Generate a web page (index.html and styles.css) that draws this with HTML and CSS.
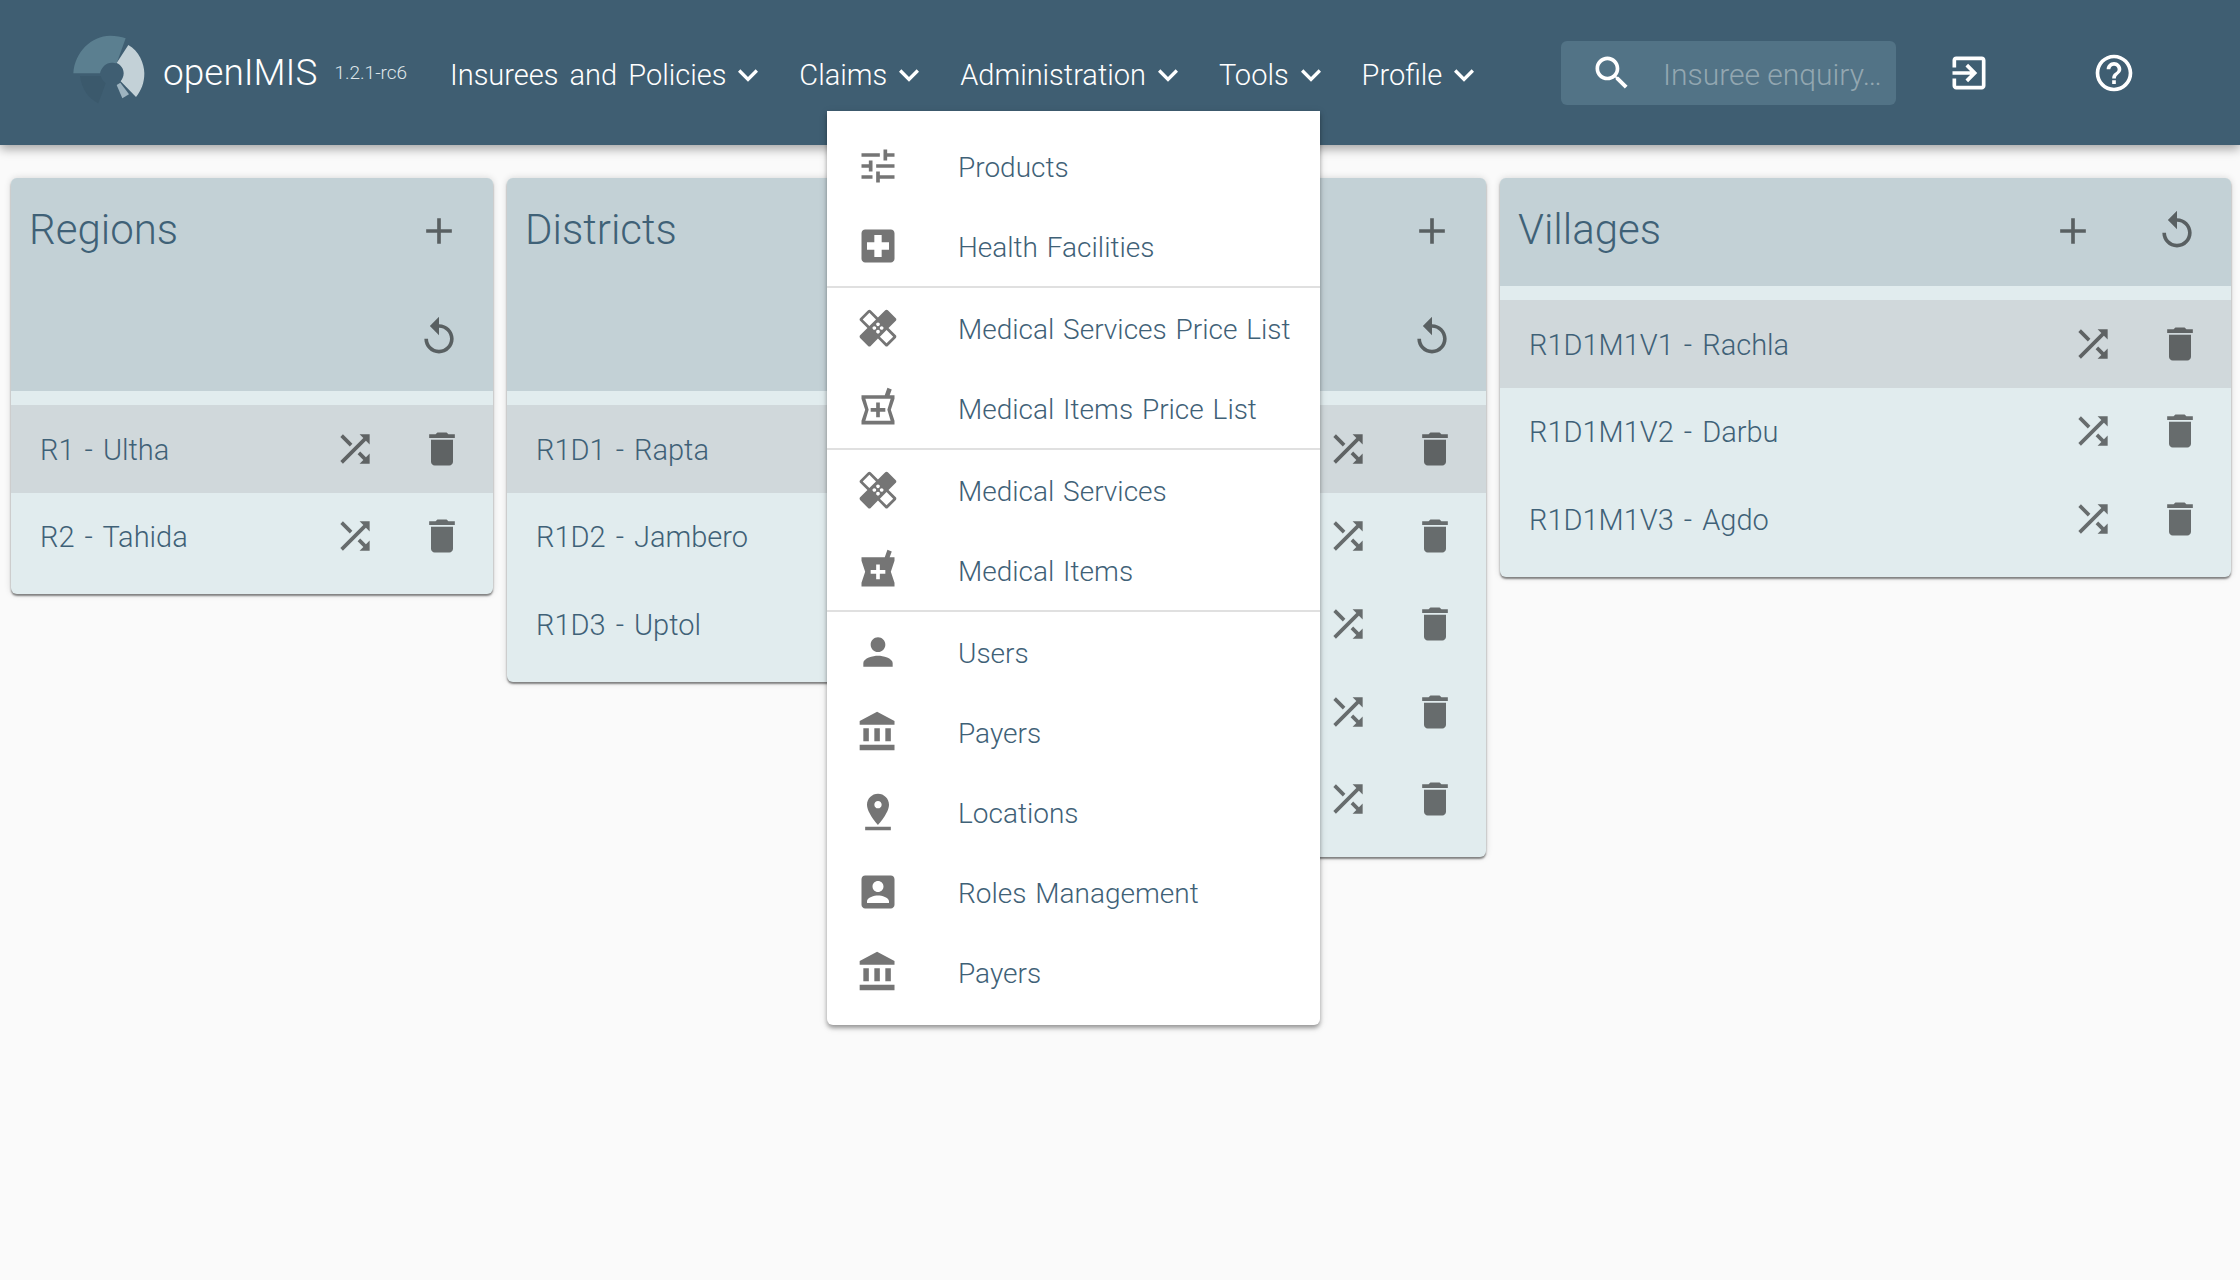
FILE: index.html
```html
<!DOCTYPE html>
<html lang="en">
  <head>
    <meta charset="UTF-8" />
    <meta name="viewport" content="width=device-width, initial-scale=1.0" />
    <title>openIMIS - Locations</title>
    <link rel="stylesheet" href="styles.css">
  </head>
  <body>
    <svg class="sprites" aria-hidden="true">
      <symbol id="i-chevron" viewBox="0 0 24 24"><path d="M16.59 8.59L12 13.17 7.41 8.59 6 10l6 6 6-6z"/></symbol>
      <symbol id="i-search" viewBox="0 0 24 24"><path d="M15.5 14h-.79l-.28-.27C15.41 12.59 16 11.11 16 9.5 16 5.91 13.09 3 9.5 3S3 5.91 3 9.5 5.91 16 9.5 16c1.61 0 3.09-.59 4.23-1.57l.27.28v.79l5 4.99L20.49 19l-4.99-5zm-6 0C7.01 14 5 11.99 5 9.5S7.01 5 9.5 5 14 7.01 14 9.5 11.99 14 9.5 14z"/></symbol>
      <symbol id="i-exit" viewBox="0 0 24 24"><path d="M10.09 15.59L11.5 17l5-5-5-5-1.41 1.41L12.67 11H3v2h9.67l-2.58 2.59zM19 3H5c-1.11 0-2 .9-2 2v4h2V5h14v14H5v-4H3v4c0 1.1.89 2 2 2h14c1.1 0 2-.9 2-2V5c0-1.1-.9-2-2-2z"/></symbol>
      <symbol id="i-help" viewBox="0 0 24 24"><path d="M11 18h2v-2h-2v2zm1-16C6.48 2 2 6.48 2 12s4.48 10 10 10 10-4.48 10-10S17.52 2 12 2zm0 18c-4.41 0-8-3.59-8-8s3.59-8 8-8 8 3.59 8 8-3.59 8-8 8zm0-14c-2.21 0-4 1.79-4 4h2c0-1.1.9-2 2-2s2 .9 2 2c0 2-3 1.75-3 5h2c0-2.25 3-2.5 3-5 0-2.21-1.79-4-4-4z"/></symbol>
      <symbol id="i-tune" viewBox="0 0 24 24"><path d="M3 17v2h6v-2H3zM3 5v2h10V5H3zm10 16v-2h8v-2h-8v-2h-2v6h2zM7 9v2H3v2h4v2h2V9H7zm14 4v-2H11v2h10zm-6-4h2V7h4V5h-4V3h-2v6z"/></symbol>
      <symbol id="i-hospital" viewBox="0 0 24 24"><path d="M19 3H5c-1.1 0-1.99.9-1.99 2L3 19c0 1.1.9 2 2 2h14c1.1 0 2-.9 2-2V5c0-1.1-.9-2-2-2zm-1 11h-4v4h-4v-4H6v-4h4V6h4v4h4v4z"/></symbol>
      <symbol id="i-healing" viewBox="0 0 24 24"><path d="M17.73 12.02l3.98-3.98c.39-.39.39-1.02 0-1.41l-4.34-4.34c-.39-.39-1.02-.39-1.41 0l-3.98 3.98L8 2.29C7.8 2.1 7.55 2 7.29 2c-.25 0-.51.1-.7.29L2.25 6.63c-.39.39-.39 1.02 0 1.41l3.98 3.98L2.25 16c-.39.39-.39 1.02 0 1.41l4.34 4.34c.39.39 1.02.39 1.41 0l3.98-3.98 3.98 3.98c.2.2.45.29.71.29.26 0 .51-.1.71-.29l4.34-4.34c.39-.39.39-1.02 0-1.41l-3.98-3.98zM12 9c.55 0 1 .45 1 1s-.45 1-1 1-1-.45-1-1 .45-1 1-1zm-4.71 1.96L3.66 7.34l3.63-3.63 3.62 3.62-3.62 3.63zM10 13c-.55 0-1-.45-1-1s.45-1 1-1 1 .45 1 1-.45 1-1 1zm2 2c-.55 0-1-.45-1-1s.45-1 1-1 1 .45 1 1-.45 1-1 1zm2-4c.55 0 1 .45 1 1s-.45 1-1 1-1-.45-1-1 .45-1 1-1zm2.66 9.34l-3.63-3.62 3.63-3.63 3.62 3.62-3.62 3.63z"/></symbol>
      <symbol id="i-pharmacy" viewBox="0 0 24 24"><path d="M21 5h-2.64l1.14-3.14L17.15 1l-1.46 4H3v2l2 6-2 6v2h18v-2l-2-6 2-6V5zm-5 9h-3v3h-2v-3H8v-2h3V9h2v3h3v2z"/></symbol>
      <symbol id="i-pharmacy-line" viewBox="0 0 24 24"><path fill-rule="evenodd" d="M21 5h-2.64l1.14-3.14L17.15 1l-1.46 4H3v2l2 6-2 6v2h18v-2l-2-6 2-6V5zM18.89 7l-1.79 6 1.79 6H5.11l1.79-6-1.79-6h13.78zM13 9h-2v3H8v2h3v3h2v-3h3v-2h-3V9z"/></symbol>
      <symbol id="i-person" viewBox="0 0 24 24"><path d="M12 12c2.21 0 4-1.79 4-4s-1.79-4-4-4-4 1.79-4 4 1.79 4 4 4zm0 2c-2.67 0-8 1.34-8 4v2h16v-2c0-2.66-5.33-4-8-4z"/></symbol>
      <symbol id="i-bank" viewBox="0 0 24 24"><path d="M4 10v7h3v-7H4zm6 0v7h3v-7h-3zM2 22h19v-3H2v3zm14-12v7h3v-7h-3zm-4.5-9L2 6v2h19V6l-9.5-5z"/></symbol>
      <symbol id="i-pin" viewBox="0 0 24 24"><path d="M18 8c0-3.31-2.69-6-6-6S6 4.69 6 8c0 4.5 6 11 6 11s6-6.5 6-11zm-8 0c0-1.1.9-2 2-2s2 .9 2 2-.89 2-2 2c-1.1 0-2-.9-2-2zM5 20v2h14v-2H5z"/></symbol>
      <symbol id="i-account" viewBox="0 0 24 24"><path d="M3 5v14c0 1.1.89 2 2 2h14c1.1 0 2-.9 2-2V5c0-1.1-.9-2-2-2H5c-1.11 0-2 .9-2 2zm12 4c0 1.66-1.34 3-3 3s-3-1.34-3-3 1.34-3 3-3 3 1.34 3 3zm-9 8c0-2 4-3.1 6-3.1s6 1.1 6 3.1v1H6v-1z"/></symbol>
      <symbol id="i-add" viewBox="0 0 24 24"><path d="M19 13h-6v6h-2v-6H5v-2h6V5h2v6h6v2z"/></symbol>
      <symbol id="i-replay" viewBox="0 0 24 24"><path d="M12 5V1L7 6l5 5V7c3.31 0 6 2.69 6 6s-2.69 6-6 6-6-2.69-6-6H4c0 4.42 3.58 8 8 8s8-3.58 8-8-3.58-8-8-8z"/></symbol>
      <symbol id="i-shuffle" viewBox="0 0 24 24"><path d="M10.59 9.17L5.41 4 4 5.41l5.17 5.17 1.42-1.41zM14.5 4l2.04 2.04L4 18.59 5.41 20 17.96 7.46 20 9.5V4h-5.5zm.33 9.41l-1.41 1.41 3.13 3.13L14.5 20H20v-5.5l-2.04 2.04-3.13-3.13z"/></symbol>
      <symbol id="i-delete" viewBox="0 0 24 24"><path d="M6 19c0 1.1.9 2 2 2h8c1.1 0 2-.9 2-2V7H6v12zM19 4h-3.5l-1-1h-5l-1 1H5v2h14V4z"/></symbol>
    </svg>

    <header class="appbar">
      <a class="brand">
        <svg class="logo" viewBox="0 0 255 270">
          <path class="logo-a" d="M40 160C44 95 95 48 150 47c18 0 34 3 47 8l-27 75c-4-1-10-2-15-2-17 0-31 14-35 32z"/>
          <path class="logo-b" d="M205 75c32 18 48 56 48 85 0 28-9 52-25 71l-46-47c5-7 9-15 9-24 0-14-8-25-21-31z"/>
          <path class="logo-c" d="M170 195l11-7 26 35-20 12z"/>
          <path class="logo-d" d="M60 168h62c2 8 8 16 15 22l-22 60c-30-14-50-44-55-82z"/>
        </svg>
        <span class="brand-name">openIMIS</span>
        <span class="brand-version">1.2.1-rc6</span>
      </a>
      <nav class="mainnav">
        <a class="navitem">Insurees and Policies<svg class="chevron"><use href="#i-chevron"/></svg></a>
        <a class="navitem">Claims<svg class="chevron"><use href="#i-chevron"/></svg></a>
        <a class="navitem">Administration<svg class="chevron"><use href="#i-chevron"/></svg></a>
        <a class="navitem">Tools<svg class="chevron"><use href="#i-chevron"/></svg></a>
        <a class="navitem">Profile<svg class="chevron"><use href="#i-chevron"/></svg></a>
      </nav>
      <div class="search">
        <svg class="search-icon"><use href="#i-search"/></svg>
        <input class="search-input" type="text" placeholder="Insuree enquiry…" />
      </div>
      <svg class="bar-icon bar-exit"><use href="#i-exit"/></svg>
      <svg class="bar-icon bar-help"><use href="#i-help"/></svg>
    </header>

    <ul class="menu">
      <li class="menu-item"><svg class="icon"><use href="#i-tune"/></svg><span class="menu-label">Products</span></li>
      <li class="menu-item"><svg class="icon"><use href="#i-hospital"/></svg><span class="menu-label">Health Facilities</span></li>
      <li class="menu-sep"></li>
      <li class="menu-item"><svg class="icon"><use href="#i-healing"/></svg><span class="menu-label">Medical Services Price List</span></li>
      <li class="menu-item"><svg class="icon"><use href="#i-pharmacy-line"/></svg><span class="menu-label">Medical Items Price List</span></li>
      <li class="menu-sep"></li>
      <li class="menu-item"><svg class="icon"><use href="#i-healing"/></svg><span class="menu-label">Medical Services</span></li>
      <li class="menu-item"><svg class="icon"><use href="#i-pharmacy"/></svg><span class="menu-label">Medical Items</span></li>
      <li class="menu-sep"></li>
      <li class="menu-item"><svg class="icon"><use href="#i-person"/></svg><span class="menu-label">Users</span></li>
      <li class="menu-item"><svg class="icon"><use href="#i-bank"/></svg><span class="menu-label">Payers</span></li>
      <li class="menu-item"><svg class="icon"><use href="#i-pin"/></svg><span class="menu-label">Locations</span></li>
      <li class="menu-item"><svg class="icon"><use href="#i-account"/></svg><span class="menu-label">Roles Management</span></li>
      <li class="menu-item"><svg class="icon"><use href="#i-bank"/></svg><span class="menu-label">Payers</span></li>
    </ul>

    <main class="columns">
      <section class="card">
        <div class="card-head">
          <h2 class="card-title">Regions</h2>
          <button class="head-btn"><svg class="icon"><use href="#i-add"/></svg></button>
          <button class="head-btn"><svg class="icon"><use href="#i-replay"/></svg></button>
        </div>
        <div class="card-body">
          <div class="row selected">
            <span class="row-label">R1 - Ultha</span>
            <button class="row-btn"><svg class="icon"><use href="#i-shuffle"/></svg></button>
            <button class="row-btn"><svg class="icon"><use href="#i-delete"/></svg></button>
          </div>
          <div class="row">
            <span class="row-label">R2 - Tahida</span>
            <button class="row-btn"><svg class="icon"><use href="#i-shuffle"/></svg></button>
            <button class="row-btn"><svg class="icon"><use href="#i-delete"/></svg></button>
          </div>
        </div>
      </section>

      <section class="card">
        <div class="card-head">
          <h2 class="card-title">Districts</h2>
          <button class="head-btn"><svg class="icon"><use href="#i-add"/></svg></button>
          <button class="head-btn"><svg class="icon"><use href="#i-replay"/></svg></button>
        </div>
        <div class="card-body">
          <div class="row selected">
            <span class="row-label">R1D1 - Rapta</span>
            <button class="row-btn"><svg class="icon"><use href="#i-shuffle"/></svg></button>
            <button class="row-btn"><svg class="icon"><use href="#i-delete"/></svg></button>
          </div>
          <div class="row">
            <span class="row-label">R1D2 - Jambero</span>
            <button class="row-btn"><svg class="icon"><use href="#i-shuffle"/></svg></button>
            <button class="row-btn"><svg class="icon"><use href="#i-delete"/></svg></button>
          </div>
          <div class="row">
            <span class="row-label">R1D3 - Uptol</span>
            <button class="row-btn"><svg class="icon"><use href="#i-shuffle"/></svg></button>
            <button class="row-btn"><svg class="icon"><use href="#i-delete"/></svg></button>
          </div>
        </div>
      </section>

      <!-- labels of this one are behind the open menu in the screenshot -->
      <section class="card">
        <div class="card-head">
          <h2 class="card-title"></h2>
          <button class="head-btn"><svg class="icon"><use href="#i-add"/></svg></button>
          <button class="head-btn"><svg class="icon"><use href="#i-replay"/></svg></button>
        </div>
        <div class="card-body">
          <div class="row selected">
            <span class="row-label"></span>
            <button class="row-btn"><svg class="icon"><use href="#i-shuffle"/></svg></button>
            <button class="row-btn"><svg class="icon"><use href="#i-delete"/></svg></button>
          </div>
          <div class="row">
            <span class="row-label"></span>
            <button class="row-btn"><svg class="icon"><use href="#i-shuffle"/></svg></button>
            <button class="row-btn"><svg class="icon"><use href="#i-delete"/></svg></button>
          </div>
          <div class="row">
            <span class="row-label"></span>
            <button class="row-btn"><svg class="icon"><use href="#i-shuffle"/></svg></button>
            <button class="row-btn"><svg class="icon"><use href="#i-delete"/></svg></button>
          </div>
          <div class="row">
            <span class="row-label"></span>
            <button class="row-btn"><svg class="icon"><use href="#i-shuffle"/></svg></button>
            <button class="row-btn"><svg class="icon"><use href="#i-delete"/></svg></button>
          </div>
          <div class="row">
            <span class="row-label"></span>
            <button class="row-btn"><svg class="icon"><use href="#i-shuffle"/></svg></button>
            <button class="row-btn"><svg class="icon"><use href="#i-delete"/></svg></button>
          </div>
        </div>
      </section>

      <section class="card">
        <div class="card-head">
          <h2 class="card-title">Villages</h2>
          <button class="head-btn"><svg class="icon"><use href="#i-add"/></svg></button>
          <button class="head-btn"><svg class="icon"><use href="#i-replay"/></svg></button>
        </div>
        <div class="card-body">
          <div class="row selected">
            <span class="row-label">R1D1M1V1 - Rachla</span>
            <button class="row-btn"><svg class="icon"><use href="#i-shuffle"/></svg></button>
            <button class="row-btn"><svg class="icon"><use href="#i-delete"/></svg></button>
          </div>
          <div class="row">
            <span class="row-label">R1D1M1V2 - Darbu</span>
            <button class="row-btn"><svg class="icon"><use href="#i-shuffle"/></svg></button>
            <button class="row-btn"><svg class="icon"><use href="#i-delete"/></svg></button>
          </div>
          <div class="row">
            <span class="row-label">R1D1M1V3 - Agdo</span>
            <button class="row-btn"><svg class="icon"><use href="#i-shuffle"/></svg></button>
            <button class="row-btn"><svg class="icon"><use href="#i-delete"/></svg></button>
          </div>
        </div>
      </section>
    </main>
  </body>
</html>
```

FILE: styles.css
```css
* {
  box-sizing: border-box;
}

body {
  margin: 0;
  height: 1280px;
  overflow: hidden;
  position: relative;
  background-color: #fafafa;
  font-family: Roboto, "Liberation Sans", sans-serif;
  font-weight: 300;
  color: #3f6177;
}

.sprites {
  display: none;
}

svg {
  fill: currentColor;
}

/* app bar */
.appbar {
  display: flex;
  align-items: center;
  height: 145px;
  padding-left: 60px;
  background-color: #3f5e72;
  color: #fff;
  box-shadow: 0 4px 10px rgba(0, 0, 0, 0.35);
  position: relative;
  z-index: 2;
}

.brand {
  display: flex;
  align-items: center;
  width: 390px;
}

.logo {
  width: 85px;
  height: 90px;
  margin: -15px 18px 0 0;
  flex-shrink: 0;
}

.logo-a { fill: #5b7f90; }
.logo-b { fill: #c3d1d7; }
.logo-c { fill: #9db3bf; }
.logo-d { fill: #3b596c; }

.brand-name {
  font-size: 37px;
  margin-right: 17px;
}

.brand-version {
  font-size: 19px;
  color: #dfe6ea;
}

.mainnav {
  display: flex;
  gap: 31px;
  width: 1111px;
  padding-top: 4px;
}

.navitem {
  display: flex;
  align-items: center;
  font-size: 29px;
  word-spacing: 4px;
  white-space: nowrap;
}

.chevron {
  width: 40px;
  height: 40px;
  margin-left: 2px;
}

.search {
  display: flex;
  align-items: center;
  width: 335px;
  height: 64px;
  padding-left: 29px;
  background-color: #527386;
  border-radius: 6px;
}

.search-icon {
  width: 44px;
  height: 44px;
  flex-shrink: 0;
}

.search-input {
  flex: 1;
  min-width: 0;
  margin-left: 29px;
  padding: 3px 0 0;
  border: 0;
  background: none;
  color: #fff;
  font: inherit;
  font-size: 30px;
}

.search-input::placeholder {
  color: #93a7b1;
  opacity: 1;
}

.bar-icon {
  width: 44px;
  height: 44px;
}

.bar-exit {
  margin-left: 51px;
}

.bar-help {
  margin-left: 101px;
}

/* open dropdown */
.menu {
  position: absolute;
  top: 111px;
  left: 827px;
  z-index: 3;
  width: 493px;
  margin: 0;
  padding: 15px 0 13px;
  list-style: none;
  background-color: #fff;
  border-radius: 0 0 6px 6px;
  box-shadow: 0 3px 4px rgba(0, 0, 0, 0.35), 0 2px 10px rgba(0, 0, 0, 0.1);
}

.menu-item {
  display: flex;
  align-items: center;
  height: 80px;
  padding-left: 29px;
  white-space: nowrap;
}

.menu-item .icon {
  margin-right: 58px;
  color: #757575;
}

.menu-label {
  padding-top: 2px;
  font-size: 28px;
  word-spacing: 2px;
}

.menu-sep {
  height: 2px;
  background-color: #e0e0e0;
}

.icon {
  width: 44px;
  height: 44px;
  flex-shrink: 0;
}

/* location columns */
.columns {
  display: grid;
  grid-template-columns: 482px 482px 483px 731px;
  gap: 14px;
  align-items: start;
  padding: 33px 0 0 11px;
}

.card {
  background-color: #e1ecee;
  border-radius: 6px;
  overflow: hidden;
  box-shadow: 0 2px 2px rgba(0, 0, 0, 0.45), 0 0 7px rgba(0, 0, 0, 0.15);
}

.card-head {
  display: flex;
  flex-wrap: wrap;
  justify-content: flex-end;
  min-height: 108px;
  padding: 0 2px 1px 0;
  background-color: #c3d1d6;
}

.card-title {
  flex: 1 0 290px;
  margin: 0;
  padding: 24px 0 0 18px;
  font-size: 42px;
  font-weight: 300;
  line-height: 56px;
}

.head-btn,
.row-btn {
  display: flex;
  align-items: center;
  justify-content: center;
  padding: 0;
  border: 0;
  background: none;
  color: rgba(0, 0, 0, 0.54);
}

.head-btn {
  width: 104px;
  height: 106px;
}

.card-body {
  padding: 14px 0;
}

.row {
  display: flex;
  align-items: center;
  height: 87.6px;
  padding: 0 8px 0 29px;
}

.row.selected {
  background-color: #d0d8db;
}

.row-label {
  flex: 1;
  padding-top: 2px;
  font-size: 29px;
  word-spacing: 3px;
  white-space: nowrap;
}

.row-btn {
  width: 87px;
  height: 87px;
}
```
